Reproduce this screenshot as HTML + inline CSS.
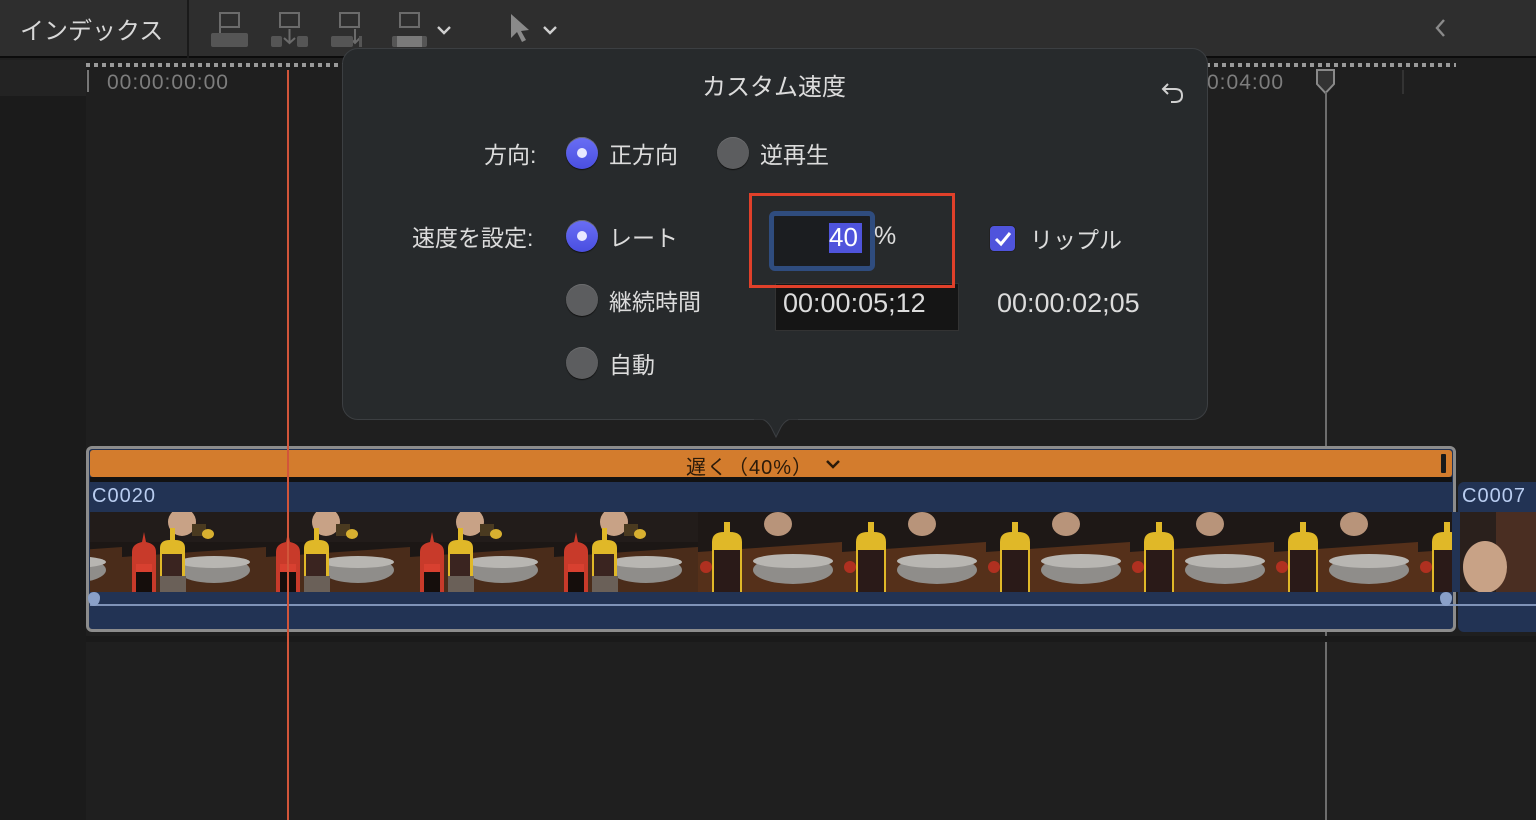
<!DOCTYPE html>
<html><head><meta charset="utf-8"><style>
*{margin:0;padding:0;box-sizing:border-box}
body{width:1536px;height:820px;overflow:hidden;background:#1f1f1f;font-family:"Liberation Sans","Noto Sans CJK JP",sans-serif;position:relative;color:#ddd}
.abs{position:absolute}
.txt{color:#dcdcdc;font-size:23px;white-space:nowrap}
.radio{position:absolute;width:32px;height:32px;border-radius:50%;background:#5c5d5f;box-shadow:inset 0 1px 0 #6a6b6d,0 1px 1px #111}
.radio.on{background:linear-gradient(#6a6ef5,#4a4fe0)}
.radio.on:after{content:"";position:absolute;left:11px;top:11px;width:10px;height:10px;border-radius:50%;background:#e8e8ff}
</style></head><body>
<!-- toolbar -->
<div class="abs" style="left:0;top:0;width:1536px;height:58px;background:#2e2e2e;border-bottom:2px solid #0c0c0c"></div>
<div class="abs" style="left:187px;top:0;width:2px;height:58px;background:#1a1a1a"></div>
<div class="abs txt" style="left:20px;top:11px;font-size:24px;color:#d8d8d8">インデックス</div>
<svg class="abs" style="left:205px;top:8px" width="360" height="42">
<g fill="none" stroke="#6b6b6b" stroke-width="2">
<rect x="15" y="5" width="19" height="14"/><line x1="15" y1="5" x2="15" y2="28"/>
<rect x="75" y="5" width="19" height="14"/><path d="M84.5 21v14M79 30l5.5 5 5.5-5"/>
<rect x="135" y="5" width="19" height="14"/><path d="M150 21v14M145 30l5 5 5-5"/>
<rect x="195" y="5" width="19" height="14"/>
<path d="M233 19l6 6 6-6M339 19l6 6 6-6" stroke="#cfcfcf" stroke-width="2.4"/>
</g>
<g fill="#555">
<rect x="6" y="25" width="37" height="14" rx="2"/>
<rect x="66" y="28" width="11" height="11" rx="2"/><rect x="92" y="28" width="11" height="11" rx="2"/>
<rect x="126" y="28" width="22" height="11" rx="2"/><rect x="154" y="28" width="3" height="11"/>
<rect x="187" y="28" width="35" height="11" rx="2"/><rect x="192" y="28" width="25" height="11" fill="#7a7a7a"/>
<path d="M306 6v24l6-6 5 10 4-2-5-9 8-1z" fill="#8a8a8a"/>
</g>
</svg>
<svg class="abs" style="left:1430px;top:17px" width="20" height="22"><path d="M14 3l-7 8 7 8" stroke="#8a8a8a" stroke-width="2.4" fill="none"/></svg>
<!-- left column -->
<div class="abs" style="left:0;top:60px;width:86px;height:760px;background:#1b1b1b"></div>
<div class="abs" style="left:0;top:60px;width:86px;height:36px;background:#232323"></div>
<!-- ruler -->
<div class="abs" style="left:86px;top:63px;width:1370px;height:4px;background:repeating-linear-gradient(90deg,#9a9a9a 0 4px,transparent 4px 8px)"></div>
<div class="abs" style="left:87px;top:70px;width:2px;height:22px;background:#777"></div>
<div class="abs" style="left:107px;top:71px;font-size:21px;color:#7d7d7d;letter-spacing:1px">00:00:00:00</div>
<div class="abs" style="left:1207px;top:71px;font-size:21px;color:#7d7d7d;letter-spacing:1px">0:04:00</div>
<div class="abs" style="left:1402px;top:70px;width:2px;height:24px;background:#333"></div>
<svg class="abs" style="left:1316px;top:69px" width="20" height="26"><path d="M1 1h17v14l-8.5 9L1 15z" fill="#333" stroke="#8a8a8a" stroke-width="2"/></svg>
<div class="abs" style="left:1325px;top:92px;width:2px;height:728px;background:#6d6d6d"></div>
<!-- storyline bg -->
<div class="abs" style="left:86px;top:636px;width:1450px;height:6px;background:#1a1a1a"></div>
<!-- clip -->
<div class="abs" style="left:86px;top:446px;width:1370px;height:186px;border:3px solid #8c8c8c;border-radius:6px;background:#223354"></div>
<div class="abs" style="left:90px;top:450px;width:1362px;height:27px;background:#d37c2d;border-radius:3px"></div>
<div class="abs" style="left:90px;top:477px;width:1362px;height:5px;background:#121212"></div>
<div class="abs" style="left:686px;top:451px;font-size:20px;color:#2a1a0a;letter-spacing:1px">遅く（40%）</div>
<svg class="abs" style="left:825px;top:458px" width="16" height="12"><path d="M2 3l6 6 6-6" stroke="#2a1a0a" stroke-width="2.5" fill="none"/></svg>
<div class="abs" style="left:1441px;top:454px;width:5px;height:19px;background:#1a1a1a;border-radius:1px"></div>
<div class="abs" style="left:92px;top:485px;font-size:20px;color:#b9cdf0;letter-spacing:1px">C0020</div>
<div class="abs" style="left:1458px;top:482px;width:78px;height:150px;background:#223354;border-radius:6px 0 0 6px"></div>
<div class="abs" style="left:1462px;top:485px;font-size:20px;color:#b9cdf0;letter-spacing:1px">C0007</div>
<svg class="abs" style="left:90px;top:512px" width="1446" height="80">
<defs>
<g id="f">
<rect width="144" height="80" fill="#1c1715"/>
<rect x="0" y="0" width="144" height="30" fill="#221c1a"/>
<path d="M0 45L144 35V80H0z" fill="#4a2c1a"/>
<ellipse cx="60" cy="10" rx="14" ry="14" fill="#c8a286"/>
<rect x="70" y="12" width="14" height="12" fill="#4a3a20"/><ellipse cx="86" cy="22" rx="6" ry="5" fill="#d8b030"/>
<ellipse cx="92" cy="58" rx="36" ry="13" fill="#8f8d8a"/><ellipse cx="92" cy="50" rx="36" ry="6" fill="#b8b6b2"/>
<path d="M10 40q0-8 10-10l2-10 2 10q10 2 10 10v40H10z" fill="#c83a2a"/>
<rect x="14" y="52" width="16" height="8" fill="#d84030"/><rect x="14" y="60" width="16" height="20" fill="#150e0c"/>
<path d="M38 36q0-8 10-8v-12h5v12q10 0 10 8v44H38z" fill="#e0b828"/>
<rect x="40" y="42" width="20" height="38" fill="#3a2420"/>
<rect x="38" y="64" width="26" height="16" fill="#6a6058"/>
</g>
<g id="g">
<rect width="144" height="80" fill="#1e1816"/>
<path d="M0 40L144 30V80H0z" fill="#55301a"/>
<ellipse cx="95" cy="58" rx="40" ry="14" fill="#8f8d8a"/><ellipse cx="95" cy="49" rx="40" ry="7" fill="#b8b6b2"/>
<ellipse cx="80" cy="12" rx="14" ry="12" fill="#b8947a"/>
<path d="M14 30q0-10 12-10v-10h6v10q12 0 12 10v50H14z" fill="#e0b828"/>
<rect x="16" y="38" width="26" height="42" fill="#2a1a18"/>
<circle cx="8" cy="55" r="6" fill="#b03020"/>
</g>
</defs>
<use href="#f" x="-112"/><use href="#f" x="32"/><use href="#f" x="176"/><use href="#f" x="320"/><use href="#f" x="464"/>
<use href="#g" x="608"/><use href="#g" x="752"/><use href="#g" x="896"/><use href="#g" x="1040"/><use href="#g" x="1184"/><use href="#g" x="1328"/>
<rect x="1362" y="0" width="8" height="80" fill="#223354"/>
<rect x="1370" y="0" width="76" height="80" fill="#2a201c"/><rect x="1406" y="0" width="40" height="80" fill="#4a2e22"/>
<ellipse cx="1395" cy="55" rx="22" ry="26" fill="#c8a286"/>
</svg>
<div class="abs" style="left:90px;top:604px;width:1446px;height:2px;background:#7f93b8"></div>
<div class="abs" style="left:88px;top:592px;width:12px;height:14px;border-radius:50%/40% 40% 60% 60%;background:#8aa0c8"></div>
<div class="abs" style="left:1440px;top:592px;width:12px;height:14px;border-radius:50%/40% 40% 60% 60%;background:#8aa0c8"></div>
<!-- playhead -->
<div class="abs" style="left:287px;top:70px;width:2px;height:750px;background:#d2553a"></div>
<!-- popover -->
<div class="abs" style="left:342px;top:48px;width:866px;height:372px;background:#272a2c;border:1px solid #3c3f42;border-radius:16px"></div>
<svg class="abs" style="left:754px;top:417px" width="44" height="28"><path d="M0 2h6q6 0 11 8l5 10 5-10q5-8 11-8h6" fill="#272a2c" stroke="#3c3f42" stroke-width="1"/><rect x="0" y="0" width="44" height="2.5" fill="#272a2c"/></svg>
<div class="abs txt" style="left:702px;top:67px;font-size:24px">カスタム速度</div>
<svg class="abs" style="left:1160px;top:81px" width="26" height="26"><path d="M8 3L3 8l5 5M3 8h12q7 0 7 6.5T15 21H11" stroke="#d0d0d0" stroke-width="2" fill="none"/></svg>
<div class="abs txt" style="left:484px;top:136px">方向:</div>
<div class="radio on" style="left:566px;top:137px"></div>
<div class="abs txt" style="left:609px;top:136px">正方向</div>
<div class="radio" style="left:717px;top:137px"></div>
<div class="abs txt" style="left:760px;top:136px">逆再生</div>
<div class="abs txt" style="left:412px;top:219px">速度を設定:</div>
<div class="radio on" style="left:566px;top:220px"></div>
<div class="abs txt" style="left:609px;top:219px">レート</div>
<div class="radio" style="left:566px;top:284px"></div>
<div class="abs txt" style="left:609px;top:283px">継続時間</div>
<div class="radio" style="left:566px;top:347px"></div>
<div class="abs txt" style="left:609px;top:346px">自動</div>
<div class="abs" style="left:775px;top:283px;width:184px;height:48px;background:#151515;border:1px solid #333"></div>
<div class="abs txt" style="left:783px;top:288px;font-size:27px">00:00:05;12</div>
<div class="abs" style="left:749px;top:193px;width:206px;height:95px;border:3px solid #e0402a"></div>
<div class="abs" style="left:769px;top:211px;width:106px;height:60px;background:#1b1d20;border:5px solid #2f4c7e;border-radius:6px"></div>
<div class="abs" style="left:829px;top:223px;width:33px;height:30px;background:#4f54dc"></div>
<div class="abs txt" style="left:829px;top:222px;font-size:26px;color:#fff">40</div>
<div class="abs txt" style="left:874px;top:222px;font-size:25px">%</div>
<div class="abs" style="left:989px;top:225px;width:27px;height:27px;border-radius:5px;background:#4f54dc;border:1px solid #222"></div>
<svg class="abs" style="left:992px;top:228px" width="22" height="22"><path d="M4 11l5 5 9-11" stroke="#fff" stroke-width="3" fill="none"/></svg>
<div class="abs txt" style="left:1030px;top:221px">リップル</div>
<div class="abs txt" style="left:997px;top:288px;font-size:27px">00:00:02;05</div>
</body></html>
